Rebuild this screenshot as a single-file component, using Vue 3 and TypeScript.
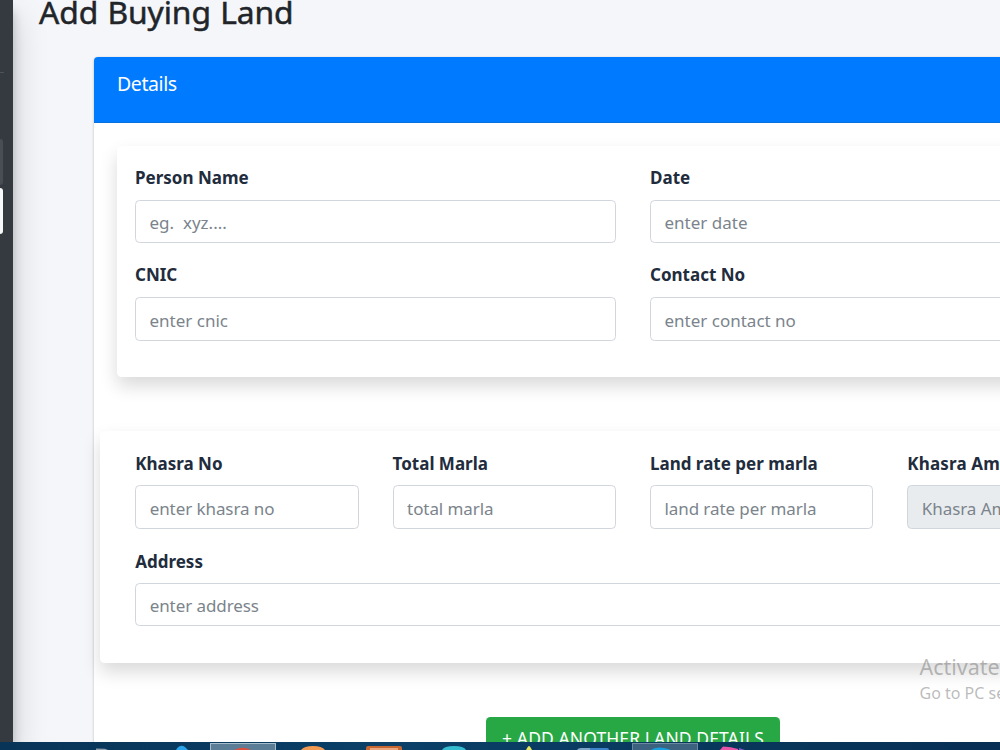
<script setup lang="ts">
interface Field {
  id: string
  label: string
  placeholder: string
  disabled?: boolean
}

const personFields: Field[] = [
  { id: 'name', label: 'Person Name', placeholder: 'eg.  xyz....' },
  { id: 'date', label: 'Date', placeholder: 'enter date' },
  { id: 'cnic', label: 'CNIC', placeholder: 'enter cnic' },
  { id: 'contact', label: 'Contact No', placeholder: 'enter contact no' },
]

const landFields: Field[] = [
  { id: 'khasra', label: 'Khasra No', placeholder: 'enter khasra no' },
  { id: 'marla', label: 'Total Marla', placeholder: 'total marla' },
  { id: 'rate', label: 'Land rate per marla', placeholder: 'land rate per marla' },
  { id: 'amount', label: 'Khasra Amount', placeholder: 'Khasra Amount', disabled: true },
  { id: 'address', label: 'Address', placeholder: 'enter address' },
]
</script>

<template>
  <div class="screen">
    <div class="page">
      <aside class="sidebar">
        <div class="brand-line"></div>
        <div class="nav-item open"></div>
        <div class="nav-item active"></div>
      </aside>
      <main class="content">
        <h1>Add Buying Land</h1>
        <section class="card">
          <header class="card-header">Details</header>
          <div class="card-body">
            <div class="group person">
              <div v-for="f in personFields" :key="f.id" class="field">
                <label :for="f.id">{{ f.label }}</label>
                <input :id="f.id" type="text" :placeholder="f.placeholder" />
              </div>
            </div>
            <div class="group land">
              <div v-for="f in landFields" :key="f.id" :class="['field', f.id]">
                <label :for="f.id">{{ f.label }}</label>
                <input :id="f.id" type="text" :placeholder="f.placeholder" :disabled="f.disabled" />
              </div>
            </div>
            <button type="button" class="add">+ ADD ANOTHER LAND DETAILS</button>
          </div>
        </section>
      </main>
    </div>
    <div class="watermark">
      <div class="wm-title">Activate Windows</div>
      <div class="wm-sub">Go to PC settings to activate Windows.</div>
    </div>
    <svg class="taskbar" width="1000" height="8" viewBox="0 0 1000 8">
      <defs>
        <linearGradient id="bar" x1="0" x2="1" y1="0" y2="0">
          <stop offset="0" stop-color="#083458" />
          <stop offset="0.4" stop-color="#0b4068" />
          <stop offset="0.75" stop-color="#08365b" />
          <stop offset="1" stop-color="#082f55" />
        </linearGradient>
      </defs>
      <rect width="1000" height="8" fill="url(#bar)" />
      <path d="M96 8V6.4l9 .4 3 1.2z" fill="#8d9ca8" />
      <path d="M176 8q1-2.500 3-3.500 3-1.500 6 .5l3 3z" fill="#2aa3ea" />
      <rect x="210.500" y="1.500" width="65" height="8" fill="#5c7d96" stroke="#a7bdca" />
      <path d="M234 8q9-4.500 17 0z" fill="#d9503f" />
      <path d="M301 8q3-4 12-4t12 4z" fill="#f39a52" />
      <path d="M366 8V6q0-2 2-2h32q2 0 2 2v2z" fill="#c86632" />
      <path d="M370 8V6h28v2z" fill="#e8a77f" />
      <path d="M442 8q2-4 12-4t12 4z" fill="#35bcd0" />
      <path d="M526 8q2-4 3-4t3 4z" fill="#e7e75c" />
      <path d="M577 8q1-2 4-2h10v2z" fill="#7fa6c6" />
      <path d="M590 8V6h17q2 0 2 2z" fill="#3d84cb" />
      <rect x="632.500" y="1.500" width="65" height="8" fill="#3d6280" stroke="#6b8aa1" />
      <path d="M651 8q3-2.500 8-2.500 7 0 12 2.500z" fill="#16a0de" />
      <path d="M720 8l3-3.500q8 0 15 2.500v1z" fill="#e855a8" />
      <path d="M739 8v-2l6 2z" fill="#8458c8" />
    </svg>
  </div>
</template>

<style>
body {
  margin: 0;
  overflow: hidden;
}
</style>

<style scoped>
* {
  box-sizing: border-box;
}
.screen {
  position: relative;
  width: 1000px;
  height: 750px;
  overflow: hidden;
  display: flex;
  flex-direction: column;
  font-family: 'Noto Sans', 'Open Sans', sans-serif;
  background: #f4f6f9;
}
.page {
  display: flex;
  height: 742px;
  overflow: hidden;
}
.sidebar {
  flex: none;
  width: 12.5px;
  background: #343a40;
  box-shadow: 0 16px 32px rgba(0, 0, 0, 0.25), 0 11px 11px rgba(0, 0, 0, 0.22);
}
.brand-line {
  height: 73px;
  width: 4px;
  border-bottom: 1px solid #4b545c;
}
.nav-item {
  width: 3.4px;
  height: 46px;
  border-radius: 0 5px 5px 0;
}
.open {
  margin-top: 66px;
  background: #484e53;
}
.active {
  margin-top: 3px;
  background: #f7f8f8;
}
.content {
  flex: none;
  width: 1200px;
  padding-left: 26.5px;
}
h1 {
  margin: 0;
  height: 56.5px;
  font-size: 31.8px;
  line-height: 24px;
  font-weight: 400;
  color: #212529;
  -webkit-text-stroke: 0.5px #212529;
  letter-spacing: -0.1px;
  word-spacing: 1.2px;
  white-space: nowrap;
}
.card {
  margin-left: 55px;
  width: 1078px;
  height: 760px;
  background: #fff;
  border-radius: 4px;
  box-shadow: 0 0 1px rgba(0, 0, 0, 0.125), 0 1px 3px rgba(0, 0, 0, 0.2);
}
.card-header {
  height: 66px;
  padding: 12px 23px;
  border-radius: 4px 4px 0 0;
  border-bottom: 1px solid #0870df;
  background: #007bff;
  color: #fff;
  font-size: 19.5px;
  line-height: 29px;
  letter-spacing: -0.4px;
}
.card-body {
  display: flex;
  flex-direction: column;
  padding: 23px 23px;
}
.group {
  display: grid;
  column-gap: 34px;
  row-gap: 18px;
  align-content: start;
  height: 231.5px;
  background: #fff;
  border-radius: 4.5px;
  box-shadow: 0 9px 18px rgba(0, 0, 0, 0.15);
}
.person {
  grid-template-columns: repeat(2, 481px);
  padding: 18px 18px 0;
}
.land {
  grid-template-columns: repeat(4, 223.4px);
  margin: 54px -17px 0;
  padding: 18px 35.2px 0;
}
.address {
  grid-column: 1 / -1;
}
.field {
  min-width: 0;
}
label {
  display: block;
  height: 36px;
  line-height: 28px;
  font-size: 17px;
  font-weight: 700;
  color: #212c3d;
  white-space: nowrap;
}
.land label {
  line-height: 29px;
}
.amount label {
  letter-spacing: 0.15px;
}
input {
  display: block;
  width: 100%;
  height: 43.500px;
  padding: 3px 13.500px 0;
  border: 1px solid #d1d6dc;
  border-radius: 4.500px;
  background: #fff;
  font: 400 17px 'Noto Sans', 'Open Sans', sans-serif;
}
.land input {
  letter-spacing: -0.08px;
}
input::placeholder {
  color: #7b848c;
  opacity: 1;
}
input:disabled {
  background: #e9ecef;
}
.add {
  align-self: center;
  width: 294px;
  height: 43px;
  margin-top: 54px;
  padding: 0;
  border: 0;
  border-radius: 4.500px;
  background: #28a745;
  color: #fff;
  font: 400 17.500px 'Noto Sans', 'Open Sans', sans-serif;
  letter-spacing: 0.1px;
  white-space: nowrap;
}
.watermark {
  position: absolute;
  left: 919.5px;
  top: 653px;
  white-space: nowrap;
  color: rgba(120, 120, 120, 0.5);
}
.wm-title {
  font-size: 21.500px;
  line-height: 28px;
}
.wm-sub {
  font-size: 16px;
  line-height: 24px;
}
.taskbar {
  flex: none;
  display: block;
}
</style>
